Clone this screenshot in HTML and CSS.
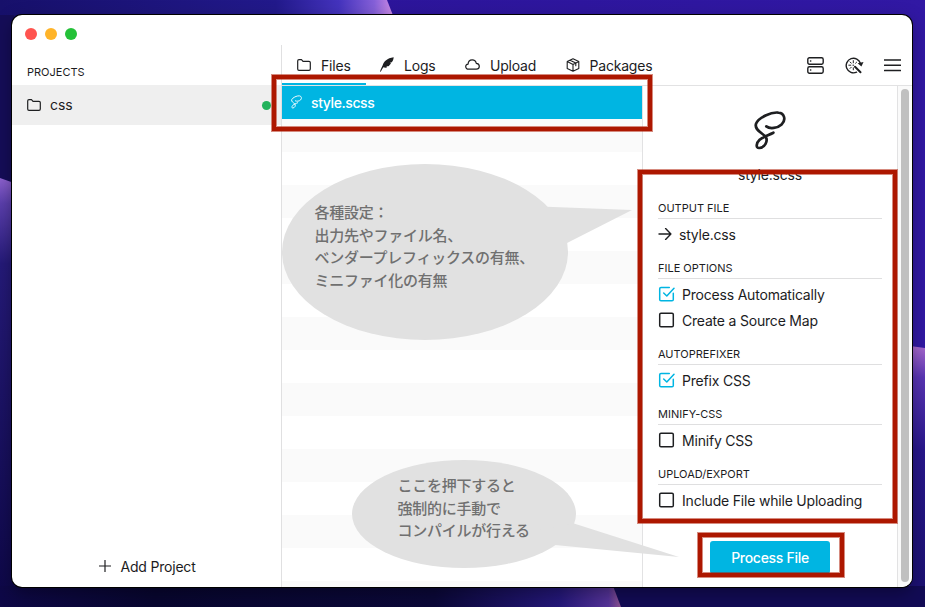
FILE: index.html
```html
<!DOCTYPE html>
<html lang="ja">
<head>
<meta charset="utf-8">
<title>style.scss</title>
<link rel="stylesheet" href="styles.css">
</head>
<body>
<svg class="wallpaper" viewBox="0 0 925 607" aria-hidden="true">
  <defs>
    <linearGradient id="sky" x1="0" x2="1"><stop offset="0" stop-color="#160f5e"/><stop offset=".38" stop-color="#2c159a"/><stop offset="1" stop-color="#3118a4"/></linearGradient>
    <linearGradient id="topband" x1="0" x2="1"><stop offset="0" stop-color="#17106b"/><stop offset=".7" stop-color="#22198b"/><stop offset=".86" stop-color="#4433bd"/><stop offset=".95" stop-color="#8560d8"/><stop offset="1" stop-color="#cf8ce6"/></linearGradient>
    <linearGradient id="leftband" x1="0" y1="0" x2="0" y2="1"><stop offset="0" stop-color="#8e62d0"/><stop offset=".06" stop-color="#5b3fad"/><stop offset=".2" stop-color="#251a79"/><stop offset="1" stop-color="#0d0747"/></linearGradient>
    <linearGradient id="rightband" x1="0" y1="0" x2="0" y2="1"><stop offset="0" stop-color="#a869cf"/><stop offset=".12" stop-color="#5935b5"/><stop offset=".4" stop-color="#28178c"/><stop offset="1" stop-color="#1a106f"/></linearGradient>
    <linearGradient id="floor" x1="0" x2="1"><stop offset="0" stop-color="#0e0847"/><stop offset=".25" stop-color="#080630"/><stop offset=".7" stop-color="#0b0839"/><stop offset=".9" stop-color="#241779"/><stop offset=".98" stop-color="#553398"/><stop offset="1" stop-color="#8d5390"/></linearGradient>
  </defs>
  <rect width="925" height="607" fill="url(#sky)"/>
  <path d="M0 0H387L394 18H0Z" fill="url(#topband)"/>
  <path d="M0 15H14V183L0 178Z" fill="#150d58"/>
  <path d="M0 178L14 183V607H0Z" fill="url(#leftband)"/>
  <path d="M910 346L925 348V607H910Z" fill="url(#rightband)"/>
  <rect x="600" y="586" width="325" height="21" fill="#120b55"/>
  <path d="M0 586H613L621 607H0Z" fill="url(#floor)"/>
</svg>

<div class="window">
  <aside class="sidebar">
    <div class="lights"><i class="red"></i><i class="amber"></i><i class="green"></i></div>
    <h2 class="sidebar-title">PROJECTS</h2>
    <div class="project">
      <svg class="folder" viewBox="0 0 14 12"><path d="M.7 2Q.7.7 2 .7H4.5L6 2.3H12Q13.3 2.3 13.3 3.6V10Q13.3 11.3 12 11.3H2Q.7 11.3.7 10Z"/></svg>
      <span>css</span><i class="status"></i>
    </div>
    <button class="add">
      <svg viewBox="0 0 12 12"><path d="M6 .3V11.7M.3 6H11.7"/></svg>Add Project
    </button>
  </aside>

  <main class="main">
    <nav class="toolbar">
      <div class="tab active"><svg class="folder" viewBox="0 0 14 12"><path d="M.7 2Q.7.7 2 .7H4.5L6 2.3H12Q13.3 2.3 13.3 3.6V10Q13.3 11.3 12 11.3H2Q.7 11.3.7 10Z"/></svg>Files</div>
      <div class="tab logs"><svg class="quill" viewBox="0 0 14 15"><path d="M0 14.5C1 11.8 1.8 9.8 2.8 8C3.8 4.7 7 1 13.7.2C13.5 2.4 12.8 4 11.8 5.3L10 5.8L11 6.5C10 7.8 9.3 8.5 8.4 9.2L6.4 9.3L7.2 10.2C5.9 10.9 4.7 10.8 3.4 10.2C2.5 11.5 1.7 13 .8 14.7Z"/></svg>Logs</div>
      <div class="tab upload"><svg class="cloud" viewBox="0 0 15 11"><path d="M3.7 10.2C1.8 10.2.7 9.1.7 7.6C.7 6.1 1.7 5.3 3.1 5.1C3.2 2.6 4.8.8 7.2.8C9.5.8 10.9 2.2 11.3 4.3C13.2 4.5 14.3 5.7 14.3 7.3C14.3 9 13.1 10.2 11.3 10.2Z"/></svg>Upload</div>
      <div class="tab packages"><svg class="box" viewBox="0 0 14 14"><path d="M7 .7L12.8 3.5V10.5L7 13.3L1.2 10.5V3.5ZM1.2 3.5L7 6.4L12.8 3.5M7 6.4V13.3M4 2.2L9.8 5V7.8"/></svg>Packages</div>
      <div class="tools">
        <svg class="server" viewBox="0 0 17 17"><rect x=".8" y=".8" width="15.4" height="6.4" rx="1.6"/><rect x=".8" y="9.8" width="15.4" height="6.4" rx="1.6"/><path d="M3.5 4H3.8M3.5 13H3.8"/></svg>
        <svg class="inspect" viewBox="0 0 19 17"><path d="M11.6 15.2A7.3 7.3 0 1 1 15.5 6.5"/><path class="solid" d="M12.6 6.2L18.5 5L16.4 9.5Z"/><path class="handle" d="M10 9.7L15.5 15.3"/><path class="rays" d="M8.3 3.6V5.8M8.3 10.8V12.8M3.8 8.2H5.8M7.9 8.2H8.7M10.6 6.2L11.6 5.2M5.1 5L6.3 6.2M5.1 11.4L6.3 10.2"/></svg>
        <svg class="menu" viewBox="0 0 17 13"><path d="M.4 1H16.6M.4 6.3H16.6M.4 11.6H16.6"/></svg>
      </div>
    </nav>
    <div class="content">
      <section class="files">
        <div class="file"><svg class="sass" viewBox="0 0 32 39"><path d="M12.8 16.3C17 18.3 24 17.3 27.8 13.5C32.3 9 30.5 2.2 24.4 1.6C17.2.8 4.7 6.4 2 12.8C.2 18.7 7.7 21.5 11.3 25.4C14.8 29.8 10.5 36.9 5.2 37C1.5 37.1 2.2 32 5.6 28.8C9.2 25.5 13.3 24.7 19.4 21.7"/></svg>style.scss</div>
      </section>
      <section class="details">
        <svg class="sass big" viewBox="0 0 32 39"><path d="M12.3 15.4C16 18.3 23.5 17.3 27.6 13.5C32.3 9 30.5 2 24.4 1.6C17.2.8 4.7 6.4 2 12.8C.2 18.7 7.7 21.5 11.3 25.4C14.8 29.8 10.5 36.9 5.2 37C1.5 37.1 2.2 32 5.6 28.8C9.2 25.5 13.3 24.7 19.4 21.7"/></svg>
        <p class="filename">style.scss</p>
        <div class="group"><h3>OUTPUT FILE</h3>
          <div class="option"><svg class="arrow" viewBox="0 0 14 12"><path d="M1 6H12.9M7.6.6L12.9 6L7.6 11.4"/></svg>style.css</div></div>
        <div class="group"><h3>FILE OPTIONS</h3>
          <div class="option"><svg class="check on" viewBox="0 0 17 16"><path d="M11.3 1.4H3Q1.7 1.4 1.7 2.7V13.5Q1.7 14.8 3 14.8H14Q15.3 14.8 15.3 13.5V7.2M5.7 7L8.8 10L16 2.2"/></svg>Process Automatically</div>
          <div class="option"><svg class="check" viewBox="0 0 17 16"><rect x="1.7" y="1.3" width="13.6" height="13.4" rx="1.3"/></svg>Create a Source Map</div></div>
        <div class="group"><h3>AUTOPREFIXER</h3>
          <div class="option"><svg class="check on" viewBox="0 0 17 16"><path d="M11.3 1.4H3Q1.7 1.4 1.7 2.7V13.5Q1.7 14.8 3 14.8H14Q15.3 14.8 15.3 13.5V7.2M5.7 7L8.8 10L16 2.2"/></svg>Prefix CSS</div></div>
        <div class="group"><h3>MINIFY-CSS</h3>
          <div class="option"><svg class="check" viewBox="0 0 17 16"><rect x="1.7" y="1.3" width="13.6" height="13.4" rx="1.3"/></svg>Minify CSS</div></div>
        <div class="group"><h3>UPLOAD/EXPORT</h3>
          <div class="option"><svg class="check" viewBox="0 0 17 16"><rect x="1.7" y="1.3" width="13.6" height="13.4" rx="1.3"/></svg>Include File while Uploading</div></div>
        <button class="process">Process File</button>
      </section>
      <div class="scroll"><i></i></div>
    </div>
  </main>
</div>

<svg class="bubbles" viewBox="0 0 925 607" aria-hidden="true">
  <ellipse cx="425" cy="252" rx="143" ry="88"/><path d="M540 206.6L632 210L567 243L540 255Z"/>
  <ellipse cx="464" cy="514" rx="112" ry="54"/><path d="M574 523.5L679 557L555 545L540 530Z"/>
</svg>
<div class="note settings">各種設定：<br>出力先やファイル名、<br>ベンダープレフィックスの有無、<br>ミニファイ化の有無</div>
<div class="note compile">ここを押下すると<br>強制的に手動で<br>コンパイルが行える</div>
<div class="frame frame-file"></div>
<div class="frame frame-options"></div>
<div class="frame frame-process"></div>
</body>
</html>
```
FILE: styles.css
```css
* { box-sizing: border-box; }
body { margin: 0; width: 925px; height: 607px; overflow: hidden; position: relative; padding: 15px 13px 20px 12px; font: 14px/20px Inter, "Noto Sans CJK JP", sans-serif; letter-spacing: -.2px; color: #1c1c1e; }
svg { display: block; flex: none; fill: none; stroke: #1e1f21; stroke-width: 1.2; stroke-linecap: round; stroke-linejoin: round; }
h2, h3, p { margin: 0; font-weight: 400; }
button { border: 0; font: inherit; letter-spacing: inherit; color: inherit; padding: 0; background: none; }
.wallpaper { position: absolute; inset: 0; width: 925px; height: 607px; stroke: none; }
.window { position: relative; display: flex; width: 900px; height: 572px; background: #fff; border-radius: 10px; overflow: hidden; box-shadow: 0 0 0 1px #000, 0 6px 18px rgba(0, 0, 0, .35); }

.sidebar { width: 269px; display: flex; flex-direction: column; }
.lights { display: flex; gap: 8px; padding: 13px 0 0 13px; height: 47px; }
.lights i { width: 12px; height: 12px; border-radius: 50%; }
.red { background: #ff544f; }
.amber { background: #ffb429; }
.green { background: #24c138; }
.sidebar-title { padding-left: 15px; height: 23px; font-size: 11px; line-height: 20px; letter-spacing: 0; }
.project { display: flex; align-items: center; height: 40px; padding: 0 10px 0 15px; background: #efefef; letter-spacing: -.1px; }
.folder { width: 14px; height: 12px; }
.project span { margin-left: 9px; }
.status { width: 9px; height: 9px; margin: 1px 0 0 auto; border-radius: 50%; background: #23b35c; }
.add { display: flex; align-items: center; gap: 9.5px; margin: auto 0 10px 87px; height: 20px; }
.add svg { width: 12px; height: 12px; margin-top: -3px; }

.main { width: 631px; display: flex; flex-direction: column; position: relative; }
.main::before { content: ""; position: absolute; left: 0; top: 30px; bottom: 0; width: 1px; background: #e0e0e1; }
.toolbar { display: flex; height: 71px; margin-left: 1px; padding-top: 30px; border-bottom: 1px solid #e2e2e3; }
.tab { display: flex; align-items: center; height: 40px; padding: 3px 0 0 15px; border-bottom: 2px solid transparent; }
.tab svg { margin: -2px 10px 0 0; }
.active { width: 84px; border-color: #00b5e2; }
.logs { width: 84px; padding-left: 14px; }
.quill { width: 14px; height: 15px; fill: #1e1f21; stroke: none; }
.upload { width: 101px; }
.cloud { width: 15px; height: 11px; }
.box { width: 14px; height: 14px; stroke-width: 1.1; }
.tab .box { margin-right: 9.5px; }
.tools { display: flex; align-items: center; height: 40px; margin-left: auto; padding-right: 11px; }
.server { width: 17px; height: 17px; stroke-width: 1.4; }
.inspect { width: 19px; height: 17px; margin-left: 21px; stroke-width: 1.4; }
.inspect .solid { fill: #1e1f21; stroke: none; }
.handle { stroke-width: 2; }
.rays { stroke-width: 1; }
.menu { width: 17px; height: 13px; margin-left: 20px; stroke-width: 1.5; }

.content { display: flex; height: 501px; }
.files { flex: none; width: 360px; margin-left: 1px; background: repeating-linear-gradient(#fff 0 33px, #fafafa 33px 66px); }
.file { display: flex; align-items: center; height: 33px; padding: 1px 0 0 9px; background: #00b5e2; color: #fff; font-weight: 500; letter-spacing: -.4px; }
.sass { width: 11px; height: 14px; stroke-width: 2.7; }
.file .sass { stroke: #fff; margin: -2px 9px 0 0; }
.details { flex: none; width: 255px; padding: 25px 15px 0; border-left: 1px solid #e2e2e3; }
.sass.big { width: 32px; height: 39px; margin: 0 0 0 95.5px; stroke-width: 2.7; }
.filename { margin: 15px 0 11px; text-align: center; }
.group { margin-bottom: 8px; }
.group h3 { height: 23px; margin-bottom: 3px; padding-top: 4px; border-bottom: 1px solid #dfdfe0; font-size: 11px; line-height: 17px; letter-spacing: 0; }
.option { display: flex; align-items: center; height: 26px; }
.check { width: 17px; height: 16px; margin: -3px 7px 0 0; stroke-width: 1.5; }
.on { stroke: #00b5e2; }
.arrow { width: 14px; height: 12px; margin: -3px 7px 0 0; stroke-width: 1.4; }
.process { display: block; width: 120px; height: 33px; margin: 27px auto 0; border-radius: 3px; background: #00b5e2; color: #fff; font-weight: 500; letter-spacing: -.3px; line-height: 33px; }
.scroll { flex: none; width: 15px; padding: 3px 0 0 3px; border-left: 1px solid #e2e2e3; background: #fafafa; }
.scroll i { display: block; width: 8px; height: 493px; border-radius: 4px; background: #c0c0c0; }

.bubbles { position: absolute; inset: 0; width: 925px; height: 607px; fill: #e1e1e1; stroke: none; }
.note { position: absolute; color: #707070; font: 500 15px/22.7px "Noto Sans CJK JP", sans-serif; letter-spacing: -.25px; white-space: nowrap; }
.settings { left: 314.5px; top: 201px; }
.compile { left: 397.5px; top: 474px; }
.frame { position: absolute; border: 4px solid #ad1700; box-shadow: 0 0 0 1px rgba(173, 23, 0, .5), inset 0 0 0 1px rgba(173, 23, 0, .5); }
.frame-file { left: 272px; top: 75px; width: 380px; height: 56px; }
.frame-options { left: 638px; top: 170px; width: 259px; height: 353px; }
.frame-process { left: 698px; top: 533px; width: 146px; height: 44px; }
```
